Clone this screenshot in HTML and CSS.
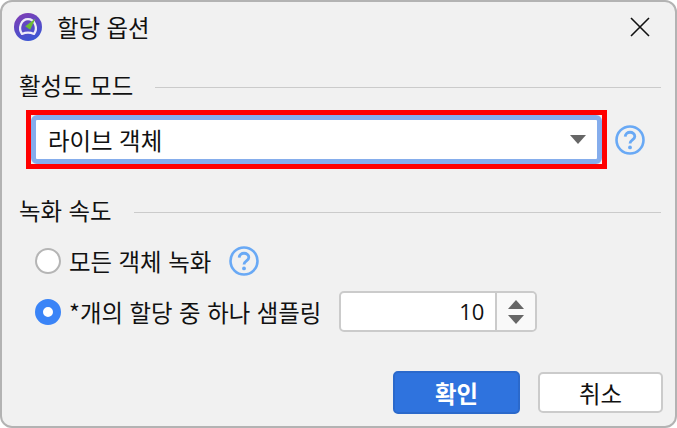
FILE: index.html
```html
<!DOCTYPE html>
<html lang="ko">
<head>
  <meta charset="UTF-8" />
  <title>할당 옵션</title>
  <link rel="stylesheet" href="styles.css">
</head>
<body>
  <div class="dialog">
    <header class="titlebar">
      <svg class="app-icon" width="28" height="28" viewBox="0 0 28 28">
        <defs>
          <linearGradient id="appBg" x1="0.2" y1="0" x2="0.6" y2="1">
            <stop offset="0" stop-color="#7f3db5"/>
            <stop offset="1" stop-color="#3a56d4"/>
          </linearGradient>
        </defs>
        <circle cx="14" cy="14" r="14" fill="url(#appBg)"/>
        <path d="M8 21 C3.8 15.2 7.2 6.2 14 6.2 C20.8 6.2 24.2 15.2 20 21 C16 19.3 12 19.3 8 21 Z" fill="none" stroke="#efedf9" stroke-width="2.2" stroke-linejoin="round"/>
        <path d="M21.5 5.5 L16.2 16.8 L11.2 13.2 Z" fill="#6dbb35"/>
      </svg>
      <span class="title">할당 옵션</span>
      <svg class="close" width="20" height="20" viewBox="0 0 20 20">
        <path d="M1 1 L19 19 M19 1 L1 19" stroke="#111" stroke-width="1.6" fill="none"/>
      </svg>
    </header>

    <section class="group group-mode">
      <div class="legend"><span>활성도 모드</span><i></i></div>
      <div class="mode-row">
        <div class="highlight">
          <div class="combo">
            <span>라이브 객체</span>
            <b class="caret"></b>
          </div>
        </div>
        <svg class="help" width="30" height="30" viewBox="0 0 30 30">
          <circle cx="15" cy="15" r="13.5" fill="none" stroke="#69a9f5" stroke-width="2.6"/>
          <path d="M10.2 11.6 C10.4 5.8 19.8 5.9 19.8 11.4 C19.8 15 15 14.8 15 18.6" fill="none" stroke="#69a9f5" stroke-width="2.8"/>
          <circle cx="15" cy="22.4" r="1.9" fill="#69a9f5"/>
        </svg>
      </div>
    </section>

    <section class="group group-speed">
      <div class="legend"><span>녹화 속도</span><i></i></div>
      <div class="radio-row first">
        <span class="radio"></span>
        <label>모든 객체 녹화</label>
        <svg class="help" width="30" height="30" viewBox="0 0 30 30">
          <circle cx="15" cy="15" r="13.5" fill="none" stroke="#69a9f5" stroke-width="2.6"/>
          <path d="M10.2 11.6 C10.4 5.8 19.8 5.9 19.8 11.4 C19.8 15 15 14.8 15 18.6" fill="none" stroke="#69a9f5" stroke-width="2.8"/>
          <circle cx="15" cy="22.4" r="1.9" fill="#69a9f5"/>
        </svg>
      </div>
      <div class="radio-row">
        <span class="radio checked"></span>
        <label>*개의 할당 중 하나 샘플링</label>
        <div class="spin">
          <span class="spin-value">10</span>
          <div class="spin-btns"><b class="up"></b><b class="down"></b></div>
        </div>
      </div>
    </section>

    <footer class="actions">
      <button class="primary">확인</button>
      <button>취소</button>
    </footer>
  </div>
</body>
</html>
```

FILE: styles.css
```css
* { box-sizing: border-box; }
html, body {
  margin: 0;
  width: 677px;
  height: 428px;
  overflow: hidden;
  background: #fff;
}
body {
  font-family: "Noto Sans CJK KR", "Noto Sans", sans-serif;
  font-size: 23.4px;
  color: #111;
}

.dialog {
  width: 677px;
  height: 428px;
  background: #f1f1f1;
  border: 2px solid #b3b3b3;
  border-radius: 12px;
  display: flex;
  flex-direction: column;
  padding: 0 14px 0 17px;
}

.titlebar {
  display: flex;
  align-items: center;
  height: 50px;
  margin-left: -5px;
}
.app-icon { flex: none; }
.title {
  margin-left: 15px;
  line-height: 30px;
}
.close { margin-left: auto; margin-right: 11px; }

.legend {
  display: flex;
  align-items: center;
  height: 30px;
}
.legend i {
  flex: 1;
  height: 1px;
  margin-left: 22px;
  margin-top: 4px;
  background: #cbcbcb;
}

.group-mode { margin-top: 18px; }
.mode-row {
  display: flex;
  align-items: center;
  margin-top: 10px;
  margin-left: 7px;
}
.highlight {
  width: 581px;
  height: 59px;
  flex: none;
  border: 5px solid #f00;
  background: #f1f1f1;
}
.combo {
  height: 49px;
  border: 5px solid #85adec;
  border-radius: 6px;
  background: #fff;
  display: flex;
  align-items: center;
  padding: 0 11px 0 12px;
}
.caret {
  margin-left: auto;
  border-left: 8px solid transparent;
  border-right: 8px solid transparent;
  border-top: 9px solid #666;
}
.mode-row .help { margin-left: 8px; }

.group-speed { margin-top: 26px; }
.radio-row {
  display: flex;
  align-items: center;
  margin-left: 16px;
  height: 41px;
}
.radio-row.first { margin-top: 15px; margin-bottom: 10px; }
.radio {
  width: 26px;
  height: 26px;
  flex: none;
  border-radius: 50%;
  background: #fff;
  border: 2px solid #b5b5b5;
}
.radio.checked {
  border: 8px solid #3a84f7;
}
.radio-row label { margin-left: 8px; }
.radio-row .help { margin-left: 18px; }

.spin {
  display: flex;
  width: 198px;
  height: 41px;
  margin-left: 18px;
  background: #fff;
  border: 2px solid #cbcbcb;
  border-radius: 5px;
}
.spin-value {
  flex: 1;
  text-align: right;
  padding-right: 11px;
  font-family: "Open Sans", sans-serif;
  font-size: 22px;
  line-height: 37px;
}
.spin-btns {
  width: 40px;
  border-left: 2px solid #cbcbcb;
  background: #f9f9f9;
  border-radius: 0 4px 4px 0;
  display: flex;
  flex-direction: column;
  align-items: center;
  justify-content: center;
  gap: 6px;
}
.spin-btns b {
  border-left: 8px solid transparent;
  border-right: 8px solid transparent;
}
.spin-btns .up { border-bottom: 9px solid #666; }
.spin-btns .down { border-top: 9px solid #666; }

.actions {
  display: flex;
  justify-content: flex-end;
  align-items: center;
  gap: 18px;
  margin-top: auto;
  margin-bottom: 12px;
  margin-right: -2px;
}
button {
  width: 125px;
  height: 41px;
  font: inherit;
  color: #111;
  background: #fff;
  border: 2px solid #cbcbcb;
  border-radius: 5px;
  padding: 0;
}
button.primary {
  width: 127px;
  height: 43px;
  color: #fff;
  font-weight: 700;
  background: #2f73de;
  border-color: #2b69cb;
}
```
